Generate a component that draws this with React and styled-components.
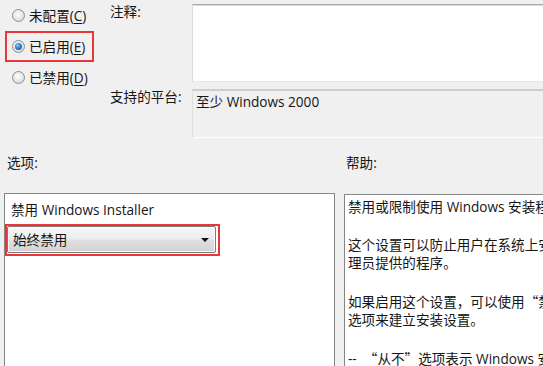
import React from "react";
import styled, { createGlobalStyle, css } from "styled-components";

const Global = createGlobalStyle`
  html, body { margin: 0; padding: 0; background: #f0f0f0; overflow: hidden; }
  body {
    font-family: "Open Sans", "Noto Sans CJK SC", sans-serif;
    font-size: 13.6px;
    color: #161616;
  }
  #root { width: 543px; height: 366px; overflow: hidden; }
`;

const Page = styled.div`
  width: 760px;
  height: 366px;
  display: flex;
  flex-direction: column;
`;

const Top = styled.div`
  display: grid;
  grid-template-columns: 110px 82px 1fr;
  grid-template-rows: 82px 56px;
`;

const RadioGroup = styled.div`
  grid-row: 1 / span 2;
  grid-column: 1;
  display: flex;
  flex-direction: column;
`;

const RadioRow = styled.label`
  display: flex;
  align-items: center;
  gap: 4px;
  box-sizing: border-box;
  margin-left: 5px;
  width: 89px;
  height: 31px;
  padding-left: 5px;
  border: 2px solid ${(p) => (p.$highlight ? "#ea3539" : "transparent")};
  line-height: 18px;
  white-space: nowrap;
`;

const RadioCircle = styled.span`
  position: relative;
  box-sizing: border-box;
  width: 13px;
  height: 13px;
  border-radius: 50%;
  border: 1px solid #8c8e90;
  background: radial-gradient(circle at 45% 40%, #ffffff 0%, #e9e9e9 45%, #cfd0d1 100%);
  flex: none;
  ${(p) =>
    p.$checked &&
    css`
      &::after {
        content: "";
        position: absolute;
        left: 2px;
        top: 2px;
        width: 7px;
        height: 7px;
        border-radius: 50%;
        background: radial-gradient(circle at 40% 35%, #8fd3ff 0%, #2b7fc6 45%, #164f86 100%);
      }
    `}
`;

const Key = styled.span`
  text-decoration: underline;
  text-underline-offset: 2px;
`;

const FieldLabel = styled.div`
  grid-column: 2;
  grid-row: ${(p) => p.$row};
  margin-top: ${(p) => p.$top}px;
  line-height: 18px;
  white-space: nowrap;
`;

const CommentBox = styled.div`
  grid-column: 3;
  grid-row: 1;
  margin-top: 4px;
  height: 78px;
  box-sizing: border-box;
  background: #ffffff;
  border-top: 1px solid #a9abae;
  border-left: 1px solid #dcdcdc;
  border-right: 1px solid #dcdcdc;
  border-bottom: 1px solid #e6e6e6;
  box-shadow: inset 0 1px 0 #dadada;
`;

const PlatformBox = styled.div`
  grid-column: 3;
  grid-row: 2;
  margin-top: 7px;
  height: 49px;
  box-sizing: border-box;
  background: #f0f0f0;
  border-top: 2px solid #cdcdcd;
  border-left: 1px solid #dedede;
  border-right: 1px solid #dedede;
  border-bottom: 1px solid #ffffff;
  padding: 2px 3px;
  line-height: 18px;
`;

const Bottom = styled.div`
  display: grid;
  grid-template-columns: 331px 360px;
  grid-template-rows: 39px 1fr;
  column-gap: 9px;
  padding-left: 4px;
  margin-top: 16px;
`;

const SectionLabel = styled.div`
  padding-left: ${(p) => p.$indent}px;
  line-height: 18px;
`;

const Panel = styled.div`
  box-sizing: border-box;
  height: 240px;
  background: #ffffff;
  border: 1px solid #858585;
  margin-top: ${(p) => p.$offset || 0}px;
`;

const Caption = styled.div`
  padding: 7px 0 0 6px;
  line-height: 18px;
  white-space: nowrap;
`;

const Highlight = styled.div`
  box-sizing: border-box;
  margin-top: 5px;
  width: 215px;
  height: 32px;
  border: 2px solid #ea3539;
  padding: 0 2px 1px 0;
  display: flex;
`;

const Combo = styled.div`
  flex: 1;
  box-sizing: border-box;
  display: flex;
  align-items: center;
  justify-content: space-between;
  padding: 1px 6px 0 5px;
  border: 1px solid #7a7a7a;
  border-radius: 2px;
  background: linear-gradient(#f7f7f7 0%, #ececec 48%, #e0e0e0 52%, #d3d3d3 100%);
  box-shadow: inset 0 0 0 1px #fbfbfb;
  line-height: 18px;
`;

const Arrow = styled.span`
  width: 0;
  height: 0;
  border-left: 4px solid transparent;
  border-right: 4px solid transparent;
  border-top: 4px solid #111;
`;

const HelpText = styled.div`
  padding: 3px 0 0 3px;
`;

const Para = styled.div`
  line-height: 18px;
  margin-bottom: 20px;
  white-space: nowrap;
`;

const Line = styled.div``;

const Quote = styled.span`
  font-family: "Noto Sans CJK SC", sans-serif;
`;

export default function App() {
  return (
    <>
      <Global />
      <Page>
        <Top>
          <RadioGroup>
            <RadioRow>
              <RadioCircle />
              <span>
                未配置(<Key>C</Key>)
              </span>
            </RadioRow>
            <RadioRow $highlight>
              <RadioCircle $checked />
              <span>
                已启用(<Key>E</Key>)
              </span>
            </RadioRow>
            <RadioRow>
              <RadioCircle />
              <span>
                已禁用(<Key>D</Key>)
              </span>
            </RadioRow>
          </RadioGroup>
          <FieldLabel $row={1} $top={3}>注释:</FieldLabel>
          <CommentBox />
          <FieldLabel $row={2} $top={6}>支持的平台:</FieldLabel>
          <PlatformBox>至少 Windows 2000</PlatformBox>
        </Top>
        <Bottom>
          <SectionLabel $indent={3}>选项:</SectionLabel>
          <SectionLabel $indent={2}>帮助:</SectionLabel>
          <Panel>
            <Caption>禁用 Windows Installer</Caption>
            <Highlight>
              <Combo>
                <span>始终禁用</span>
                <Arrow />
              </Combo>
            </Highlight>
          </Panel>
          <Panel $offset={1}>
            <HelpText>
              <Para>禁用或限制使用 Windows 安装程序。</Para>
              <Para>
                <Line>这个设置可以防止用户在系统上安装软件，或者只允许用户安装由系统管</Line>
                <Line>理员提供的程序。</Line>
              </Para>
              <Para>
                <Line>
                  如果启用这个设置，可以使用<Quote>“</Quote>禁用 Windows Installer<Quote>”</Quote>框中的
                </Line>
                <Line>选项来建立安装设置。</Line>
              </Para>
              <Para>
                --{"\u00a0 "}<Quote>“</Quote>从不<Quote>”</Quote>选项表示 Windows 安装程序完全启用。
              </Para>
            </HelpText>
          </Panel>
        </Bottom>
      </Page>
    </>
  );
}
